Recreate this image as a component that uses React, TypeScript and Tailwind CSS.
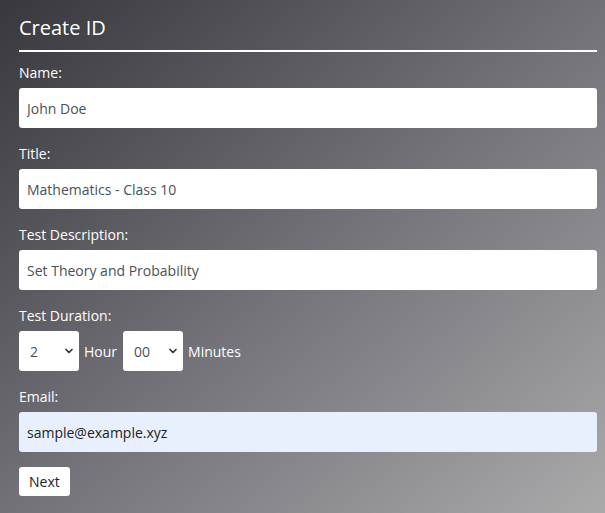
import { ChevronDown } from 'lucide-react'

function Field({ label, value, autofill }: { label: string; value: string; autofill?: boolean }) {
  return (
    <div className="mt-[16px]">
      <label className="block text-[14px] leading-[20px] text-white">{label}</label>
      <input
        defaultValue={value}
        className={`mt-[5px] block h-[40px] w-full rounded-[3px] px-[8px] text-[14px] outline-none ${
          autofill ? 'bg-[#e8f0fe] text-[#222]' : 'bg-white text-[#495057]'
        }`}
      />
    </div>
  )
}

function Select({ value, options }: { value: string; options: string[] }) {
  return (
    <div className="relative h-[40px] w-[60px] rounded-[3px] bg-white">
      <select
        defaultValue={value}
        className="h-full w-full appearance-none bg-transparent pl-[11px] text-[14px] text-[#495057] outline-none"
      >
        {options.map((o) => (
          <option key={o}>{o}</option>
        ))}
      </select>
      <ChevronDown className="pointer-events-none absolute right-[4px] top-[14px] h-[12px] w-[12px] text-[#333]" strokeWidth={3.5} />
    </div>
  )
}

export default function App() {
  return (
    <div
      className="min-h-[513px] w-full bg-gradient-to-br from-[#38383d] via-[#727177] to-[#aaaaab] pl-[19px] pr-[8px] pt-[14px] pb-4 text-white"
      style={{ fontFamily: '"Open Sans", sans-serif' }}
    >
      <h2 className="pb-[8px] text-[20px] leading-[28px] text-white">Create ID</h2>
      <div className="mb-[-5px] h-[2px] w-full bg-white" />

      <Field label="Name:" value="John Doe" />
      <Field label="Title:" value="Mathematics - Class 10" />
      <Field label="Test Description:" value="Set Theory and Probability" />

      <div className="mt-[16px]">
        <label className="block text-[14px] leading-[20px]">Test Duration:</label>
        <div className="mt-[5px] flex items-center">
          <Select value="2" options={['1', '2', '3']} />
          <span className="ml-[5px] mr-[6px] text-[14px]">Hour</span>
          <Select value="00" options={['00', '15', '30', '45']} />
          <span className="ml-[5px] text-[14px]">Minutes</span>
        </div>
      </div>

      <Field label="Email:" value="sample@example.xyz" autofill />

      <button className="mt-[15px] h-[29px] rounded-[3px] bg-white px-[10px] text-[14px] text-[#222]">
        Next
      </button>
    </div>
  )
}
